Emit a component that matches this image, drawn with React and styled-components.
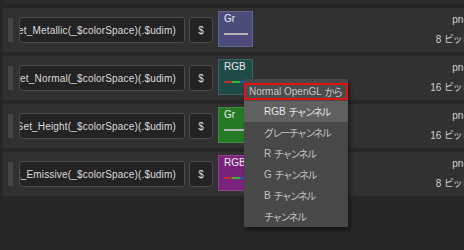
import React from 'react'
import styled, { createGlobalStyle } from 'styled-components'

const GlobalStyle = createGlobalStyle`
  html, body {
    margin: 0;
    padding: 0;
    overflow: hidden;
    background: #262626;
    font-family: "Liberation Sans", "Noto Sans CJK JP", sans-serif;
    font-size: 10px;
  }
`

const Page = styled.div`
  position: relative;
  width: 472px;
  height: 250px;
  padding-left: 3px;
  box-sizing: border-box;
`

const List = styled.div`
  display: flex;
  flex-direction: column;
  gap: 4px;
`

const Stub = styled.div`
  height: 4px;
  background: #2c2c2c;
`

const Row = styled.div`
  display: flex;
  align-items: center;
  height: 44px;
  background: #313131;
  padding-left: 5px;
`

const Handle = styled.div`
  width: 5px;
  height: 24px;
  background: #454545;
  margin-right: 6px;
  flex-shrink: 0;
`

const Field = styled.div`
  box-sizing: border-box;
  height: 26px;
  border: 1px solid #4a4a4a;
  border-radius: 3px;
  background: #232323;
  color: #dcdcdc;
  display: flex;
  align-items: center;
  overflow: hidden;
  white-space: nowrap;
  flex-shrink: 0;
`

const PathField = styled(Field)`
  width: 166px;
  justify-content: flex-end;
  padding-right: 8px;
  letter-spacing: 0.17px;

  span {
    flex-shrink: 0;
  }
`

const DollarButton = styled(Field)`
  width: 24px;
  margin-left: 4px;
  justify-content: center;
`

const Swatch = styled.div`
  box-sizing: border-box;
  width: 35px;
  height: 36px;
  margin: 0 0 2px 5px;
  padding: 1px 0 0 5px;
  border: 1px solid rgba(255, 255, 255, 0.14);
  background: ${({ $color }) => $color};
  flex-shrink: 0;
`

const SwatchLabel = styled.div`
  color: #ececec;
  line-height: 12px;
`

const ChannelLine = styled.div`
  display: flex;
  width: 24px;
  height: 2px;
  margin-top: 8px;
`

const Segment = styled.div`
  flex: 1;
  background: ${({ $color }) => $color};
`

const Info = styled.div`
  margin-left: auto;
  align-self: flex-start;
  padding: 6px 3px 0 0;
  display: flex;
  flex-direction: column;
  align-items: flex-end;
  gap: 7px;
  color: #d0d0d0;
  line-height: 12px;
  white-space: nowrap;
`

const Kana = styled.span`
  font-family: "Noto Sans CJK JP", sans-serif;
  letter-spacing: -1.7px;
`

const Menu = styled.div`
  position: absolute;
  left: 244px;
  top: 79px;
  width: 104px;
  box-sizing: border-box;
  padding-top: 4px;
  background: #484848;
  box-shadow: 2px 3px 4px rgba(0, 0, 0, 0.45);
`

const MenuHeader = styled.div`
  box-sizing: border-box;
  height: 17px;
  margin-bottom: 1px;
  padding-left: 3px;
  border: 2px solid #e31212;
  background: #4c4c4c;
  color: #c8c8c8;
  display: flex;
  align-items: center;
  white-space: nowrap;
`

const MenuItem = styled.div`
  height: 21px;
  padding-left: 20px;
  display: flex;
  align-items: center;
  white-space: nowrap;
  background: ${({ $active }) => ($active ? '#606060' : 'transparent')};
  color: ${({ $active }) => ($active ? '#e6e6e6' : '#c4c4c4')};
`

const rows = [
  { path: '$textureSet_Metallic(_$colorSpace)(.$udim)', label: 'Gr', color: '#4b4b7c', rgb: false, depth: '8' },
  { path: '$textureSet_Normal(_$colorSpace)(.$udim)', label: 'RGB', color: '#1e4a47', rgb: true, depth: '16' },
  { path: '$textureSet_Height(_$colorSpace)(.$udim)', label: 'Gr', color: '#257a25', rgb: false, depth: '16' },
  { path: '$textureSet_Emissive(_$colorSpace)(.$udim)', label: 'RGB', color: '#7a237a', rgb: true, depth: '8' },
]

const channels = [
  { prefix: 'RGB', kana: 'チャンネル', active: true },
  { prefix: '', kana: 'グレーチャンネル' },
  { prefix: 'R', kana: 'チャンネル' },
  { prefix: 'G', kana: 'チャンネル' },
  { prefix: 'B', kana: 'チャンネル' },
  { prefix: '', kana: 'チャンネル' },
]

const MapRow = ({ row }) => (
  <Row>
    <Handle />
    <PathField>
      <span>{row.path}</span>
    </PathField>
    <DollarButton>$</DollarButton>
    <Swatch $color={row.color}>
      <SwatchLabel>{row.label}</SwatchLabel>
      <ChannelLine>
        {row.rgb ? (
          <>
            <Segment $color="#b83232" />
            <Segment $color="#36b836" />
            <Segment $color="#3450c4" />
          </>
        ) : (
          <Segment $color="#b4b4b4" />
        )}
      </ChannelLine>
    </Swatch>
    <Info>
      <span>png</span>
      <span>
        {row.depth} <Kana>ビット</Kana>
      </span>
    </Info>
  </Row>
)

export default function App() {
  return (
    <>
      <GlobalStyle />
      <Page>
        <List>
          <Stub />
          {rows.map((row) => (
            <MapRow key={row.path} row={row} />
          ))}
        </List>
        <Menu>
          <MenuHeader>
            Normal OpenGL&nbsp;<Kana>から</Kana>
          </MenuHeader>
          {channels.map((c) => (
            <MenuItem key={c.prefix + c.kana} $active={c.active}>
              {c.prefix && <span>{c.prefix}&nbsp;</span>}
              <Kana>{c.kana}</Kana>
            </MenuItem>
          ))}
        </Menu>
      </Page>
    </>
  )
}
